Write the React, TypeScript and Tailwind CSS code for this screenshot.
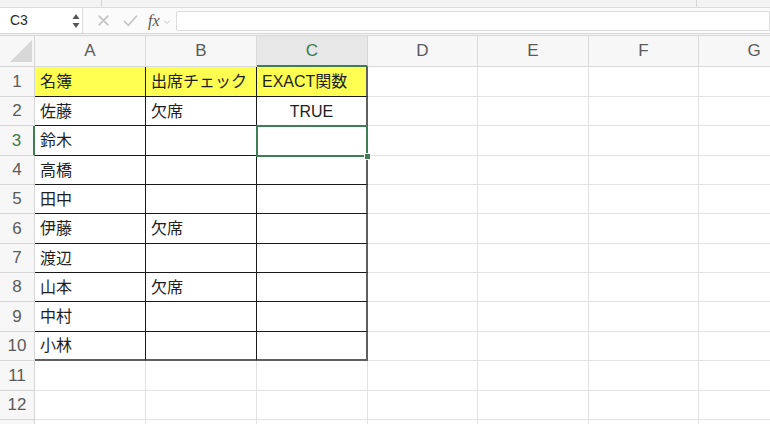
import React from "react";

const COLS = ["A", "B", "C", "D", "E", "F", "G"];
const COL_W = ["w-[111px]", "w-[111px]", "w-[111px]", "w-[110px]", "w-[111px]", "w-[110px]", "w-[111px]"];
const ROW_H = ["h-[30px]", "h-[29px]", "h-[30px]", "h-[29px]", "h-[29px]", "h-[30px]", "h-[29px]", "h-[29px]", "h-[30px]", "h-[29px]", "h-[30px]", "h-[29px]", "h-[29px]"];

const DATA: Record<string, string> = {
  A1: "名簿", B1: "出席チェック", C1: "EXACT関数",
  A2: "佐藤", B2: "欠席", C2: "TRUE",
  A3: "鈴木",
  A4: "高橋",
  A5: "田中",
  A6: "伊藤", B6: "欠席",
  A7: "渡辺",
  A8: "山本", B8: "欠席",
  A9: "中村",
  A10: "小林",
};

function Cell({ col, row }: { col: number; row: number }) {
  const key = COLS[col] + (row + 1);
  const txt = DATA[key];
  const inTable = col <= 2 && row <= 9;
  const yellow = row === 0 && col <= 2;
  const selected = col === 2 && row === 2;
  let border = "border-r border-b border-[#e2e2e2]";
  if (inTable) {
    const r = col === 2 ? "border-r-2 border-r-[#5f5f5f]" : "border-r border-r-[#1a1a1a]";
    const b = row === 9 ? "border-b-2 border-b-[#5f5f5f]" : "border-b border-b-[#1a1a1a]";
    border = r + " " + b;
  }
  const center = key === "C2";
  return (
    <div
      className={
        "relative shrink-0 flex items-center " +
        COL_W[col] + " " + border + " " +
        (selected ? "z-10 " : "") +
        (yellow ? "bg-[#ffff52] " : "bg-white ") +
        (center ? "justify-center pt-[1px]" : "pl-[5px] pt-[1px]")
      }
    >
      {txt && <span className="text-[16px] text-[#1e1e1e] whitespace-nowrap leading-none">{txt}</span>}
      {selected && (
        <>
          <div className="absolute left-[-1px] top-[-1px] right-[-2px] bottom-[-2px] border-2 border-[#3f7d52] pointer-events-none" />
          <div className="absolute right-[-5px] bottom-[-5px] w-[7px] h-[7px] bg-[#3f7d52] border border-white" />
        </>
      )}
    </div>
  );
}

export default function App() {
  return (
    <div
      className="w-[770px] h-[424px] overflow-hidden bg-white relative"
      style={{ fontFamily: '"Liberation Sans", "Noto Sans CJK JP", sans-serif' }}
    >
      {/* top ribbon remnant */}
      <div className="h-[8px] bg-[#f3f3f3] border-b border-[#dcdcdc] flex">
        <div className="w-[102px] border-r border-[#d6d6d6]" />
        <div className="w-[595px] border-r border-[#d6d6d6]" />
      </div>
      {/* formula bar */}
      <div className="h-[25px] flex items-stretch bg-white">
        <div className="w-[83px] flex items-center justify-between border-r border-[#d9d9d9] bg-white">
          <span className="pl-[10px] text-[14px] text-[#2b2b2b]">C3</span>
          <svg width="8" height="18" viewBox="0 0 8 18" className="mr-[2px]">
            <path d="M4 2 L7.5 7 L0.5 7 Z" fill="#555" />
            <path d="M4 16 L7.5 11 L0.5 11 Z" fill="#555" />
          </svg>
        </div>
        <div className="w-[93px] flex items-center bg-[#fbfbfb]">
          <svg width="13" height="13" viewBox="0 0 12 12" className="ml-[14px]">
            <path d="M1.5 1.5 L10.5 10.5 M10.5 1.5 L1.5 10.5" stroke="#c4c4c4" strokeWidth="1.5" />
          </svg>
          <svg width="15" height="13" viewBox="0 0 14 12" className="ml-[13px]">
            <path d="M1 6.5 L5 10.5 L13 1.5" stroke="#c4c4c4" strokeWidth="1.5" fill="none" />
          </svg>
          <span
            className="ml-[10px] text-[16px] italic text-[#555] leading-none"
            style={{ fontFamily: '"Liberation Serif", serif' }}
          >
            fx
          </span>
          <svg width="8" height="6" viewBox="0 0 8 6" className="ml-[3px] mt-[3px]">
            <path d="M1 1.5 L4 4.5 L7 1.5" stroke="#c2c2c2" strokeWidth="1" fill="none" />
          </svg>
        </div>
        <div className="flex-1 flex items-center bg-[#fbfbfb]">
          <div className="w-full h-[20px] bg-white border border-[#dcdcdc] rounded-l-[2px]" />
        </div>
      </div>
      <div className="h-[3px] border-t border-b border-[#d4d4d4] bg-[#f7f7f7]" />
      {/* header row */}
      <div className="flex h-[31px]">
        <div className="w-[35px] shrink-0 bg-[#f7f7f7] border-r border-b border-[#d6d6d6] relative">
          <svg width="35" height="31" viewBox="0 0 35 31" className="absolute left-0 top-0">
            <path d="M10 26 L32 4 L32 26 Z" fill="#d8d8d8" />
          </svg>
        </div>
        {COLS.map((c, i) => (
          <div
            key={c}
            className={
              "shrink-0 flex items-center justify-center text-[17px] " +
              COL_W[i] + " " +
              (i === 2
                ? "bg-[#e7e7e7] text-[#3a7a4f] border-r border-r-[#d6d6d6] border-b-2 border-b-[#3f7d52]"
                : "bg-[#f7f7f7] text-[#5a5a5a] border-r border-b border-[#dadada]")
            }
          >
            {c}
          </div>
        ))}
      </div>
      {/* rows */}
      {ROW_H.map((h, r) => (
        <div key={r} className={"flex " + h}>
          <div
            className={
              "w-[35px] shrink-0 flex items-center justify-center text-[17px] bg-[#f7f7f7] " +
              (r === 2
                ? "text-[#3a7a4f] bg-[#e7e7e7] border-r-2 border-r-[#3f7d52] border-b border-b-[#d6d6d6]"
                : "text-[#5a5a5a] border-r border-b border-[#d6d6d6]")
            }
          >
            {r < 12 ? r + 1 : ""}
          </div>
          {COLS.map((_, c) => (
            <Cell key={c} col={c} row={r} />
          ))}
        </div>
      ))}
    </div>
  );
}
